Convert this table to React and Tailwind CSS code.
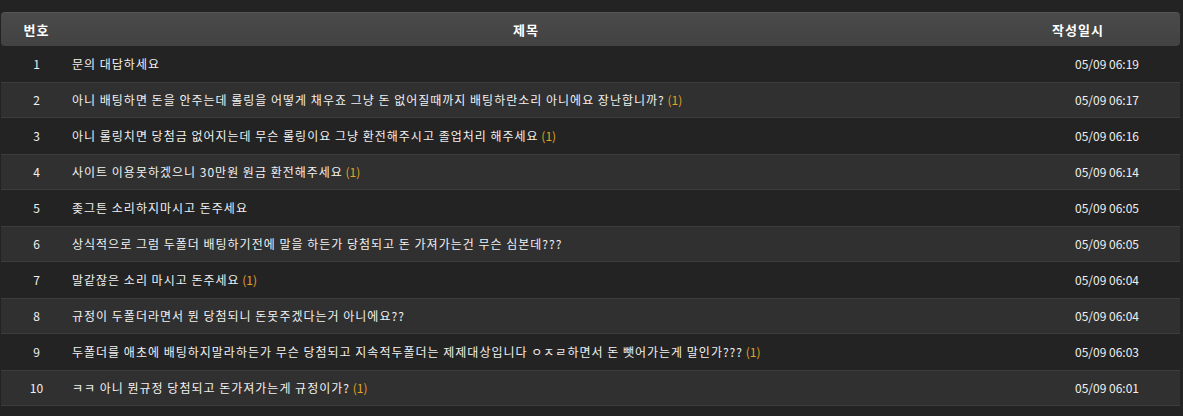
const rows = [
  { no: 1, title: '문의 대답하세요', c: 0, date: '05/09 06:19' },
  { no: 2, title: '아니 배팅하면 돈을 안주는데 롤링을 어떻게 채우죠 그냥 돈 없어질때까지 배팅하란소리 아니에요 장난합니까?', c: 1, date: '05/09 06:17' },
  { no: 3, title: '아니 롤링치면 당첨금 없어지는데 무슨 롤링이요 그냥 환전해주시고 졸업처리 해주세요', c: 1, date: '05/09 06:16' },
  { no: 4, title: '사이트 이용못하겠으니 30만원 원금 환전해주세요', c: 1, date: '05/09 06:14' },
  { no: 5, title: '좆그튼 소리하지마시고 돈주세요', c: 0, date: '05/09 06:05' },
  { no: 6, title: '상식적으로 그럼 두폴더 배팅하기전에 말을 하든가 당첨되고 돈 가져가는건 무슨 심본데???', c: 0, date: '05/09 06:05' },
  { no: 7, title: '말같잖은 소리 마시고 돈주세요', c: 1, date: '05/09 06:04' },
  { no: 8, title: '규정이 두폴더라면서 뭔 당첨되니 돈못주겠다는거 아니에요??', c: 0, date: '05/09 06:04' },
  { no: 9, title: '두폴더를 애초에 배팅하지말라하든가 무슨 당첨되고 지속적두폴더는 제제대상입니다 ㅇㅈㄹ하면서 돈 뺏어가는게 말인가???', c: 1, date: '05/09 06:03' },
  { no: 10, title: 'ㅋㅋ 아니 뭔규정 당첨되고 돈가져가는게 규정이가?', c: 1, date: '05/09 06:01' },
];

export default function App() {
  return (
    <div
      className="w-[1183px] h-[416px] bg-[#232323] pt-3 overflow-hidden"
      style={{ fontFamily: '"Noto Sans CJK KR", "Noto Sans", sans-serif' }}
    >
      <div className="w-[1179px] ml-[1px]">
        {/* header */}
        <div className="flex items-center h-[34px] rounded-[4px] bg-gradient-to-b from-[#4a4a4a] to-[#424242] border-t border-[#555] text-white font-bold text-[13px] tracking-[1px]">
          <div className="w-[71px] text-center">번호</div>
          <div className="flex-1 text-center">제목</div>
          <div className="w-[200px] text-center pr-[4px]">작성일시</div>
        </div>
        {rows.map((r) => (
          <div
            key={r.no}
            className={
              'flex items-center h-[36px] text-[12px] text-[#f0f0f0] ' +
              (r.no % 2 === 0
                ? 'bg-[#303030] border-y border-[#3d3d3d]'
                : 'bg-[#232323]')
            }
          >
            <div className="w-[71px] text-center">{r.no}</div>
            <div className="flex-1 whitespace-nowrap tracking-[1px]">
              {r.title}
              {r.c > 0 && <span className="text-[#e0a526] tracking-normal"> (1)</span>}
            </div>
            <div className="w-[200px] pl-[95px] whitespace-nowrap">{r.date}</div>
          </div>
        ))}
      </div>
    </div>
  );
}
